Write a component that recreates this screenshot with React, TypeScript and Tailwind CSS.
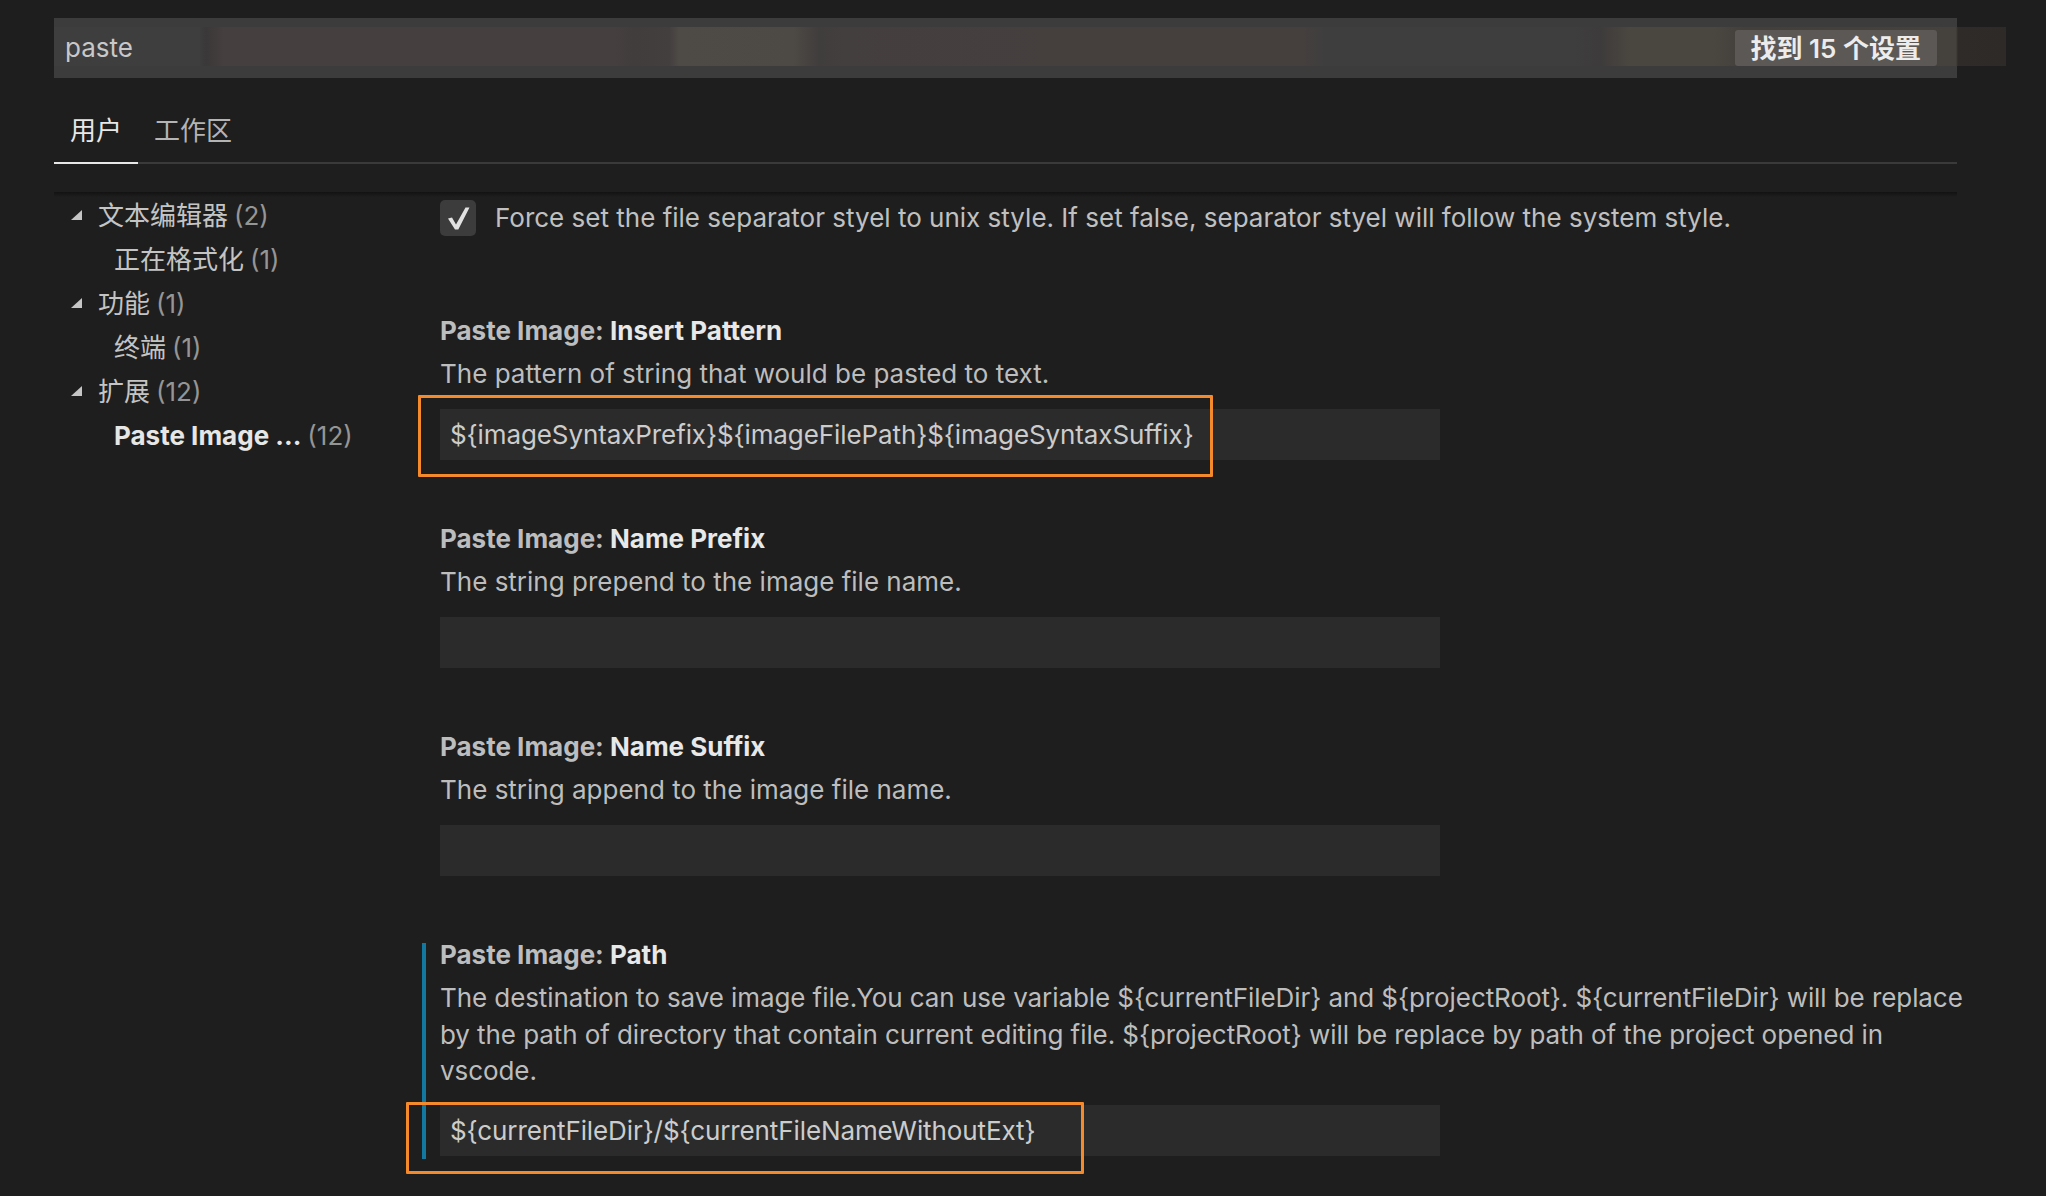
import React from "react";

function Tri() {
  return (
    <svg width="11" height="10" viewBox="0 0 11 10" className="shrink-0">
      <polygon points="11,0 11,10 0,10" fill="#c5c5c5" />
    </svg>
  );
}

function TreeRow({ label, count, level, bold }: { label: string; count: string; level: number; bold?: boolean }) {
  return (
    <div className="h-[44px] flex items-center whitespace-nowrap">
      {level === 1 ? (
        <div className="pl-[17px] flex items-center">
          <Tri />
          <span className="ml-[16px] text-[#c4c4c4]">{label}</span>
        </div>
      ) : (
        <div className="pl-[60px]">
          <span className={bold ? "font-bold text-[#e6e6e6]" : "text-[#c4c4c4]"}>{label}</span>
        </div>
      )}
      <span className="ml-[6px] text-[#959595]">{count}</span>
    </div>
  );
}

function Title({ a, b }: { a: string; b: string }) {
  return (
    <div className="leading-[36px] font-bold whitespace-nowrap">
      <span className="text-[#bdbdbd]">{a} </span>
      <span className="text-[#e8e8e8]">{b}</span>
    </div>
  );
}

function Input({ value, box }: { value?: string; box?: string }) {
  return (
    <div className="relative mt-[17px] w-[1000px] h-[51px] bg-[#2b2b2b] flex items-center pl-[10px] text-[#cccccc] whitespace-nowrap tracking-[-0.1px]">
      {value}
      {box === "1" && (
        <div className="absolute left-[-22px] top-[-14px] w-[795px] h-[82px] border-[3px] border-[#f58a2c] rounded-[1px]" />
      )}
      {box === "2" && (
        <div className="absolute left-[-34px] top-[-3px] w-[678px] h-[72px] border-[3px] border-[#f58a2c] rounded-[1px]" />
      )}
    </div>
  );
}

export default function App() {
  return (
    <div className="w-[2046px] h-[1196px] bg-[#1e1e1e] overflow-hidden text-[26px] font-['Inter','Noto_Sans_CJK_SC',sans-serif] relative">
      <div className="pl-[54px] pt-[18px] w-[1957px]">
        {/* Search bar */}
        <div className="relative h-[60px] bg-[#3c3c3c] flex items-center justify-between">
          <div className="absolute left-0 top-[9px] h-[39px] w-[1952px] bg-[linear-gradient(90deg,#3e3e3e_0px,#3e3e3e_145px,#3a3838_152px,#463f3f_170px,#463f3f_560px,#413d3d_580px,#443f3f_615px,#4e4a45_625px,#4d4944_740px,#403d3d_765px,#443f3f_790px,#453f3e_1000px,#453f3e_1250px,#3f3e3e_1270px,#3f3e3e_1520px,#3d3b3b_1545px,#4a4640_1575px,#4a4640_1660px,#433f3b_1690px,#45413c_1890px,#45413c_1902px,#2e2b28_1904px,#2d2a27_1952px)]" />
          <span className="relative pl-[11px] text-[#c8c8c8] leading-none">paste</span>
          <span className="relative mr-[20px] h-[36px] px-[16px] flex items-center rounded-[3px] bg-[#5b5855] text-[#ececec] font-semibold whitespace-nowrap">
            找到 15 个设置
          </span>
        </div>

        {/* Tabs */}
        <div className="mt-[34px] flex border-b-2 border-[#3a3a3a] w-[1903px]">
          <div className="px-[16px] pb-[13px] pt-[1px] leading-[36px] text-[#e7e7e7] border-b-2 border-[#e7e7e7] -mb-[2px]">用户</div>
          <div className="px-[16px] pb-[13px] pt-[1px] leading-[36px] text-[#b4b4b4]">工作区</div>
        </div>

        {/* Content */}
        <div className="relative mt-[28px] flex w-[1903px]">
          <div className="absolute left-0 top-0 w-full h-[5px] bg-[linear-gradient(180deg,#121212,#1e1e1e)]" />
          {/* Tree */}
          <div className="w-[368px] shrink-0 pt-[1px]">
            <TreeRow label="文本编辑器" count="(2)" level={1} />
            <TreeRow label="正在格式化" count="(1)" level={2} />
            <TreeRow label="功能" count="(1)" level={1} />
            <TreeRow label="终端" count="(1)" level={2} />
            <TreeRow label="扩展" count="(12)" level={1} />
            <TreeRow label="Paste Image ..." count="(12)" level={2} bold />
          </div>

          {/* Settings */}
          <div className="flex-1 pt-[8px]">
            <div className="pl-[18px] flex items-center h-[36px]">
              <div className="w-[36px] h-[36px] rounded-[5px] bg-[#3c3c3c] flex items-center justify-center shrink-0">
                <svg width="23" height="23" viewBox="0 0 23 23">
                  <path d="M1 11.5 L5 10.5 L9 17.5 L18.5 0.5 L22.5 0.5 L11.3 22.5 L8 22.5 Z" fill="#e2e2e2" />
                </svg>
              </div>
              <span className="ml-[19px] -mt-[1px] text-[#c0c0c0] whitespace-nowrap">
                Force set the file separator styel to unix style. If set false, separator styel will follow the system style.
              </span>
            </div>

            <div className="pl-[18px] mt-[77px]">
              <Title a="Paste Image:" b="Insert Pattern" />
              <div className="mt-[7px] leading-[36px] text-[#bdbdbd]">The pattern of string that would be pasted to text.</div>
              <Input value="${imageSyntaxPrefix}${imageFilePath}${imageSyntaxSuffix}" box="1" />
            </div>

            <div className="pl-[18px] mt-[61px]">
              <Title a="Paste Image:" b="Name Prefix" />
              <div className="mt-[7px] leading-[36px] text-[#bdbdbd]">The string prepend to the image file name.</div>
              <Input />
            </div>

            <div className="pl-[18px] mt-[61px]">
              <Title a="Paste Image:" b="Name Suffix" />
              <div className="mt-[7px] leading-[36px] text-[#bdbdbd]">The string append to the image file name.</div>
              <Input />
            </div>

            <div className="mt-[61px] flex">
              <div className="w-[4px] bg-[#13789f] mt-[6px] -mb-[3px] mr-[14px] shrink-0" />
              <div>
                <Title a="Paste Image:" b="Path" />
                <div className="mt-[7px] leading-[36.5px] text-[#bdbdbd] whitespace-nowrap tracking-[-0.08px]">
                  The destination to save image file.You can use variable ${"{"}currentFileDir{"}"} and ${"{"}projectRoot{"}"}. ${"{"}currentFileDir{"}"} will be replace
                  <br />
                  by the path of directory that contain current editing file. ${"{"}projectRoot{"}"} will be replace by path of the project opened in
                  <br />
                  vscode.
                </div>
                <div className="-mt-[2px]">
                  <Input value="${currentFileDir}/${currentFileNameWithoutExt}" box="2" />
                </div>
              </div>
            </div>
          </div>
        </div>
      </div>
    </div>
  );
}
